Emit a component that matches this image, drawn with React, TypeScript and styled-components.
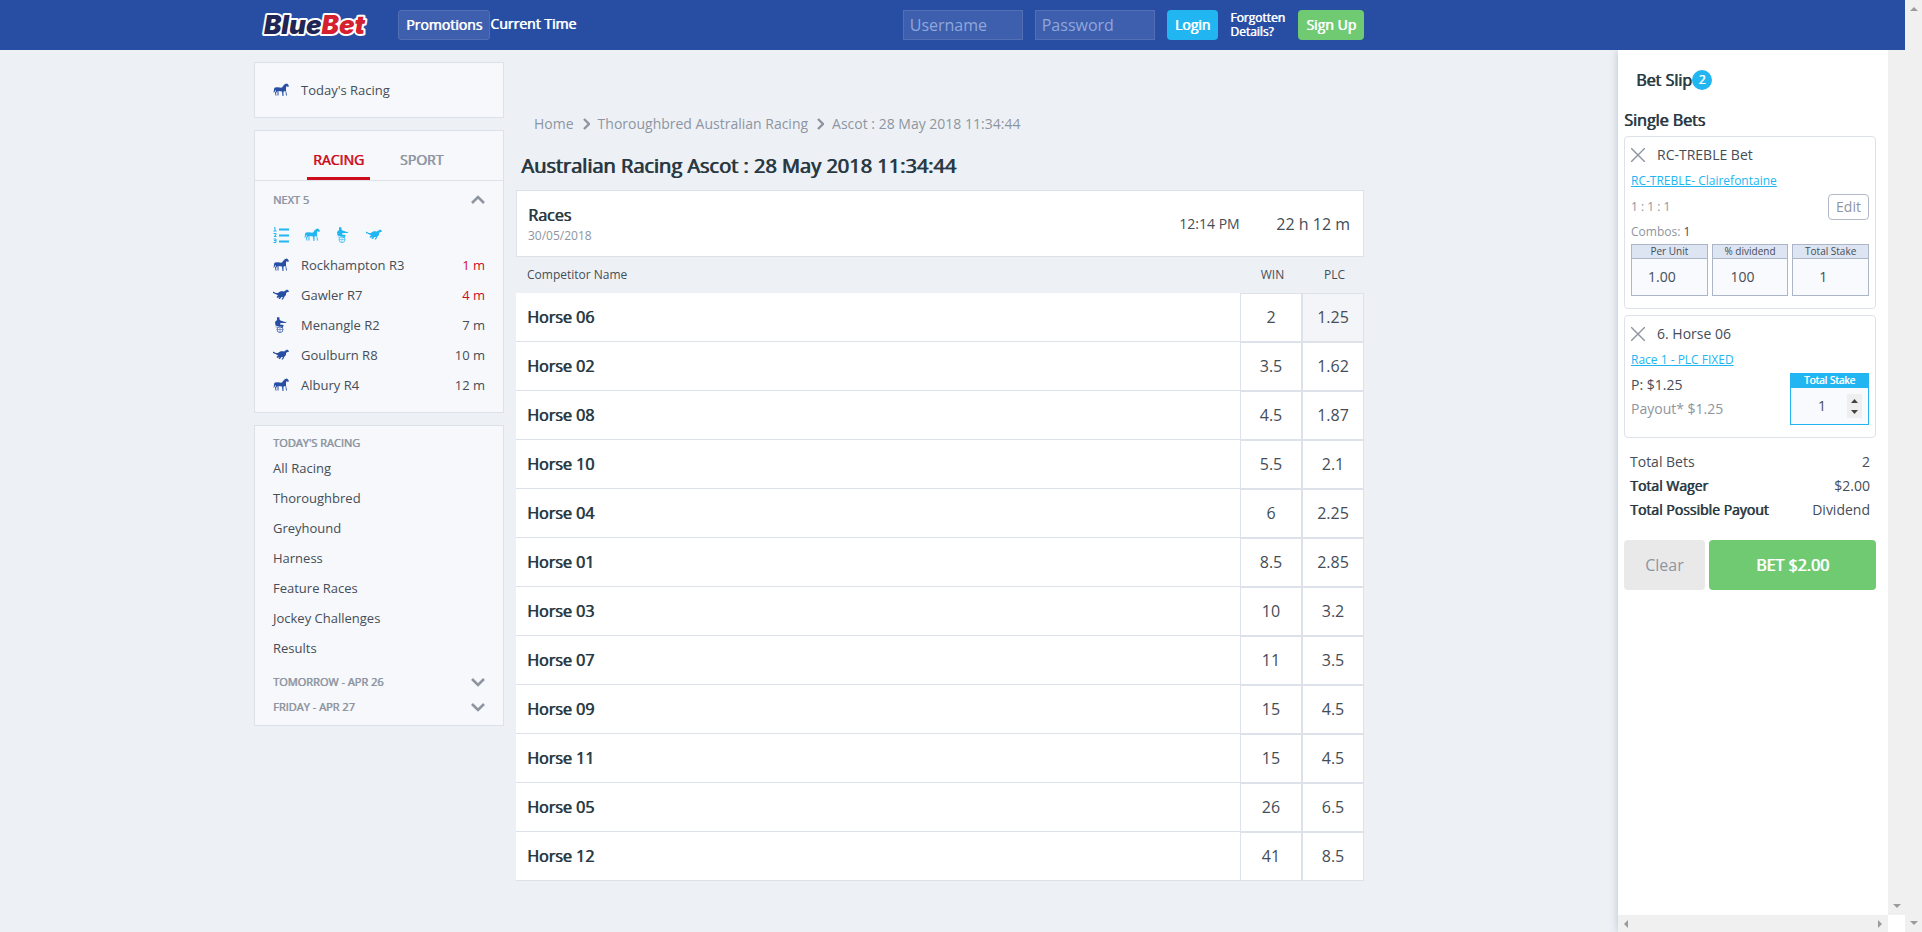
import React from 'react';
import styled, { createGlobalStyle, css } from 'styled-components';

const c = {
  blue: '#284ea3',
  cyan: '#21b6f2',
  green: '#6fca72',
  red: '#cf0c1c',
  ink: '#283842',
  text: '#454d57',
  muted: '#8e95a1',
  line: '#dde2ea',
  page: '#edf1f6',
  panel: '#f6f8fc',
};

const Global = createGlobalStyle`
  *, *::before, *::after { box-sizing: border-box; }
  body { margin: 0; background: ${c.page}; color: ${c.text}; font: 14px/20px "Open Sans", sans-serif; }
  button, input { font: inherit; color: inherit; margin: 0; }
  button { cursor: pointer; border: 0; padding: 0; background: none; }
  a { color: inherit; text-decoration: none; }
  h1, h2, h3, p, ul, ol { margin: 0; padding: 0; list-style: none; font-weight: 400; }
`;

const heavy = css`
  font-weight: 400;
  text-shadow: 0.05em 0 0 currentColor;
`;

const Window = styled.div`
  display: flex;
  min-height: 100vh;
`;
const Page = styled.div`
  flex: 1;
  min-width: 0;
  display: flex;
  flex-direction: column;
`;
const TopBar = styled.header`
  height: 50px;
  padding-right: 287px;
  background: ${c.blue};
  color: #fff;
`;
const TopInner = styled.div`
  max-width: 1110px;
  height: 50px;
  margin: 0 auto;
  padding-left: 6px;
  display: flex;
  align-items: center;
`;
const Logo = styled.a`
  width: 138px;
  display: flex;
`;
const Promotions = styled.button`
  height: 30px;
  padding: 0 7px;
  border: 1px solid #526fb6;
  border-radius: 3px;
  background: #3e5fad;
  line-height: 28px;
  ${heavy}
`;
const CurrentTime = styled.span`
  flex: 1;
  padding-bottom: 2px;
  ${heavy}
`;
const LoginForm = styled.form`
  display: flex;
  align-items: center;
  gap: 12px;
`;
const Credential = styled.input`
  width: 120px;
  height: 30px;
  padding: 0 6px;
  border: 1px solid #526fb6;
  background: #3e5fad;
  font-size: 16px;
  color: #fff;
  &::placeholder { color: #8fa7dc; opacity: 1; }
`;
const TopButton = styled.button<{ $bg: string }>`
  height: 30px;
  padding: 0 8px;
  border-radius: 4px;
  background: ${(p) => p.$bg};
  color: #fff;
  ${heavy}
`;
const Forgotten = styled.a`
  width: 56px;
  font-size: 12px;
  line-height: 14px;
  ${heavy}
`;

const Body = styled.div`
  flex: 1;
  display: flex;
`;
const Content = styled.div`
  flex: 1;
  min-width: 0;
`;
const Columns = styled.div`
  max-width: 1110px;
  margin: 0 auto;
  padding-top: 12px;
  display: flex;
  align-items: flex-start;
  gap: 12px;
`;
const Sidebar = styled.aside`
  width: 250px;
  flex: none;
  display: flex;
  flex-direction: column;
  gap: 12px;
`;
const Panel = styled.section`
  border: 1px solid ${c.line};
  background: ${c.panel};
  color: ${c.text};
  font-size: 13px;
`;
const TodayLink = styled.a`
  display: flex;
  align-items: center;
  gap: 12px;
  height: 54px;
  padding: 0 18px;
`;
const Tabs = styled.div`
  display: flex;
  justify-content: center;
  gap: 20px;
  height: 50px;
  padding-left: 2px;
  border-bottom: 1px solid ${c.line};
`;
const Tab = styled.button<{ $active?: boolean }>`
  padding: 12px 6px 0;
  min-width: 63px;
  border-bottom: 3px solid ${(p) => (p.$active ? c.red : 'transparent')};
  color: ${(p) => (p.$active ? c.red : c.muted)};
  font-size: 14px;
  ${heavy}
`;
const PanelBody = styled.div<{ $top: number; $bottom: number }>`
  padding: ${(p) => p.$top}px 18px ${(p) => p.$bottom}px;
`;
const Fold = styled.button<{ $h: number }>`
  width: 100%;
  height: ${(p) => p.$h}px;
  display: flex;
  align-items: center;
  justify-content: space-between;
  color: ${c.muted};
  font-size: 11px;
  ${heavy}
`;
const Filters = styled.div`
  display: flex;
  align-items: center;
  gap: 15px;
  height: 30px;
  margin-top: 10px;
  color: ${c.cyan};
`;
const FilterButton = styled.button`
  display: flex;
  color: inherit;
`;
const RaceRow = styled.a`
  display: flex;
  align-items: center;
  gap: 12px;
  height: 30px;
`;
const RaceName = styled.span`
  flex: 1;
`;
const Countdown = styled.span<{ $soon?: boolean }>`
  color: ${(p) => (p.$soon ? c.red : c.text)};
`;
const Menu = styled.nav`
  padding-bottom: 6px;
`;
const MenuLink = styled.a`
  display: block;
  height: 30px;
  line-height: 30px;
`;
const IconBox = styled.svg`
  display: block;
  flex: none;
`;

const Main = styled.main`
  flex: 1;
  min-width: 0;
`;
const Crumbs = styled.nav`
  display: flex;
  align-items: center;
  gap: 8px;
  padding: 51px 18px 0;
  height: 72px;
  color: ${c.muted};
`;
const Title = styled.h1`
  padding: 18px 5px 0;
  height: 56px;
  font-size: 20px;
  line-height: 27px;
  color: ${c.ink};
  ${heavy}
`;
const RaceHead = styled.header`
  display: flex;
  align-items: center;
  height: 67px;
  padding: 0 13px 0 11px;
  border: 1px solid ${c.line};
  background: #fff;
`;
const RaceTitle = styled.div`
  flex: 1;
  padding-top: 2px;
`;
const RaceLabel = styled.h2`
  font-size: 16px;
  line-height: 22px;
  color: ${c.ink};
  ${heavy}
`;
const RaceDate = styled.p`
  font-size: 12px;
  color: ${c.muted};
`;
const JumpTime = styled.span`
  width: 97px;
`;
const TimeLeft = styled.span`
  font-size: 16px;
`;
const Runners = styled.table`
  width: 100%;
  border-collapse: separate;
  border-spacing: 0;
`;
const HeadCell = styled.th<{ $price?: boolean }>`
  height: 36px;
  padding: 0 0 0 ${(p) => (p.$price ? 3 : 11)}px;
  width: ${(p) => (p.$price ? '62px' : 'auto')};
  text-align: ${(p) => (p.$price ? 'center' : 'left')};
  font-size: 12px;
  font-weight: 400;
`;
const NameCell = styled.th`
  height: 49px;
  padding: 0 11px;
  border-bottom: 1px solid ${c.line};
  background: #fff;
  text-align: left;
  font-size: 16px;
  color: ${c.ink};
  ${heavy}
`;
const PriceCell = styled.td`
  height: 49px;
  padding: 0;
`;
const Price = styled.button<{ $picked?: boolean }>`
  display: block;
  width: 100%;
  height: 49px;
  padding-bottom: 1px;
  border: 1px solid ${c.line};
  background: ${(p) => (p.$picked ? '#f4f5f8' : '#fff')};
  font-size: 16px;
`;

const Slip = styled.aside`
  width: 270px;
  flex: none;
  display: flex;
  flex-direction: column;
  background: #fff;
  box-shadow: 0 0 8px #b9c1d3;
  clip-path: inset(0 0 0 -8px);
`;
const SlipBody = styled.div`
  flex: 1;
  padding: 17px 12px 0 6px;
`;
const SlipTitle = styled.h2`
  display: flex;
  align-items: center;
  padding-left: 12px;
  height: 26px;
  font-size: 16px;
  color: ${c.ink};
  ${heavy}
`;
const Count = styled.span`
  width: 20px;
  height: 20px;
  border-radius: 50%;
  background: ${c.cyan};
  color: #fff;
  font-size: 12px;
  text-align: center;
`;
const SlipHeading = styled.h3`
  height: 43px;
  padding-top: 17px;
  font-size: 16px;
  color: ${c.ink};
  ${heavy}
`;
const Bet = styled.article<{ $h: number }>`
  min-height: ${(p) => p.$h}px;
  margin-bottom: 6px;
  padding: 8px 6px 12px;
  border: 1px solid ${c.line};
  border-radius: 4px;
`;
const BetName = styled.div`
  display: flex;
  align-items: center;
  gap: 12px;
  height: 20px;
`;
const Remove = styled.button`
  display: flex;
  color: ${c.muted};
`;
const BetLink = styled.a`
  display: block;
  margin-top: 7px;
  font-size: 12px;
  line-height: 18px;
  color: ${c.cyan};
  text-decoration: underline;
`;
const Line = styled.div`
  display: flex;
  align-items: center;
  justify-content: space-between;
  height: 26px;
  margin-top: 4px;
  font-size: 12px;
  color: ${c.muted};
`;
const Edit = styled.button`
  width: 41px;
  height: 26px;
  border: 1px solid #b3b9c9;
  border-radius: 4px;
  font-size: 14px;
  color: ${c.muted};
`;
const Combos = styled.p`
  height: 24px;
  font-size: 12px;
  line-height: 23px;
  color: ${c.muted};
  b { color: ${c.text}; font-weight: 400; }
`;
const Stakes = styled.div`
  display: flex;
  gap: 4px;
`;
const StakeBox = styled.label<{ $active?: boolean }>`
  flex: 1;
  min-width: 0;
  display: flex;
  flex-direction: column;
  height: 52px;
  border: 1px solid ${(p) => (p.$active ? c.cyan : '#adb5c9')};
  background: #f8fafd;
  text-align: center;
`;
const StakeLabel = styled.span<{ $active?: boolean }>`
  height: 14px;
  border-bottom: ${(p) => (p.$active ? '0' : '1px solid #adb5c9')};
  background: ${(p) => (p.$active ? c.cyan : '#dde4f2')};
  color: ${(p) => (p.$active ? '#fff' : c.text)};
  font-size: 10px;
  line-height: 13px;
  ${(p) => p.$active && heavy}
`;
const StakeRow = styled.span`
  flex: 1;
  display: flex;
  align-items: center;
  padding: 0 6px 1px;
`;
const StakeInput = styled.input`
  flex: 1;
  width: 0;
  min-width: 0;
  height: 24px;
  border: 0;
  padding: 0 15px 0 0;
  background: transparent;
  text-align: center;
  font-size: 14px;
`;
const StepInput = styled(StakeInput)`
  padding: 0;
`;
const Spinner = styled.span`
  display: flex;
  width: 15px;
  height: 24px;
  background: #efefef;
  color: #444;
`;
const SingleBottom = styled.div`
  display: flex;
  justify-content: space-between;
`;
const Payouts = styled.div`
  padding-top: 4px;
  line-height: 24px;
`;
const Payout = styled.p<{ $muted?: boolean }>`
  color: ${(p) => (p.$muted ? c.muted : c.text)};
`;
const SingleStake = styled.div`
  width: 79px;
  padding-top: 4px;
  display: flex;
`;
const Totals = styled.dl`
  margin: 0;
  padding: 6px 6px 0;
`;
const TotalRow = styled.div`
  display: flex;
  justify-content: space-between;
  line-height: 24px;
  dd { margin: 0; }
`;
const TotalLabel = styled.dt<{ $heavy?: boolean }>`
  color: ${(p) => (p.$heavy ? c.ink : c.text)};
  ${(p) => p.$heavy && heavy}
`;
const Actions = styled.div`
  display: flex;
  gap: 4px;
  margin-top: 18px;
`;
const Clear = styled.button`
  width: 81px;
  height: 50px;
  border-radius: 4px;
  background: #e9e9ea;
  color: ${c.muted};
  font-size: 16px;
`;
const Place = styled.button`
  flex: 1;
  height: 50px;
  border-radius: 4px;
  background: ${c.green};
  color: #fff;
  font-size: 16px;
  ${heavy}
`;

const ScrollV = styled.div<{ $gap: number }>`
  width: 17px;
  flex: none;
  display: flex;
  flex-direction: column;
  align-items: center;
  justify-content: space-between;
  margin-bottom: ${(p) => p.$gap}px;
  padding: 5px 0;
  background: #f0f0f0;
`;
const ScrollH = styled.div`
  height: 17px;
  display: flex;
  align-items: center;
  justify-content: space-between;
  padding: 0 4px;
  background: #f0f0f0;
`;
const SlipFrame = styled.div`
  display: flex;
  flex: none;
  background: #fff;
`;

const Arrow = ({ dir }: { dir: 'up' | 'down' | 'left' | 'right' }) => {
  const d = {
    up: 'M0 6L4 2L8 6Z',
    down: 'M0 2L4 6L8 2Z',
    left: 'M6 0L2 4L6 8Z',
    right: 'M2 0L6 4L2 8Z',
  }[dir];
  return (
    <svg width="8" height="8" viewBox="0 0 8 8" fill="#9b9b9b" aria-hidden="true">
      <path d={d} />
    </svg>
  );
};

const Chevron = ({ dir }: { dir: 'up' | 'down' | 'right' }) => {
  const d = {
    up: 'M1 8L7 2L13 8',
    down: 'M1 2L7 8L13 2',
    right: 'M2 1L7 6L2 11',
  }[dir];
  const [w, h] = dir === 'right' ? [8, 12] : [14, 10];
  return (
    <svg
      width={w}
      height={h}
      viewBox={`0 0 ${w} ${h}`}
      fill="none"
      stroke="currentColor"
      strokeWidth={dir === 'right' ? 2.4 : 2.6}
      aria-hidden="true"
    >
      <path d={d} />
    </svg>
  );
};

type Kind = 'horse' | 'dog' | 'harness' | 'list';

const RaceIcon = ({ kind, color = c.blue }: { kind: Kind; color?: string }) => (
  <IconBox width="16" height="16" viewBox="0 0 32 32" fill={color} stroke={color} aria-hidden="true">
    {kind === 'horse' && (
      <path
        stroke="none"
        d="M32 8L30 5L28 3L24 4L21 7L18 11C15 12 12 10 8 11C5 10 2 12 2 15L1 22L3 20L5 16L6 18L4 21L5 27H7L6 22L9 18L9 27H11L11 18L18 19L19 28H21L21 19L25 18L26 27H28L26 17L26 12L27 8L30 10Z"
      />
    )}
    {kind === 'dog' && (
      <path
        stroke="none"
        d="M32 8L28 5L25 7L22 9C18 8 13 8 10 12L6 12L0 9L0 12L7 15L10 17L7 20L9 22L13 20L11 24L14 24L17 20L20 20L17 25L20 25L23 19L26 16L26 12L29 10L31 10Z"
      />
    )}
    {kind === 'harness' && (
      <>
        <path
          stroke="none"
          d="M9 0L13 1L13 5L15 7L24 10L24 11L27 9L26 12L15 12L14 15L21 16L21 18L18 22L16 22L17 18L8 18L5 17L4 10L8 6L8 2Z"
        />
        <circle cx="14" cy="25" r="6" fill="none" strokeWidth="1.5" />
        <path d="M14 19V31M8 25H20M5 20H20" fill="none" strokeWidth="1" />
      </>
    )}
    {kind === 'list' && (
      <>
        <path d="M12 5H32M12 17H32M12 29H32" fill="none" strokeWidth="4" />
        <path
          d="M2 2L4 1V8M1 8H7M1 13H6V16L2 19H7M1 24H6V31H1M2 27H6"
          fill="none"
          strokeWidth="2"
        />
      </>
    )}
  </IconBox>
);

const BlueBetLogo = () => (
  <svg width="116" height="36" viewBox="0 0 116 36" role="img" aria-label="BlueBet">
    <text
      x="4"
      y="27"
      fontFamily="Inter, sans-serif"
      fontWeight="900"
      fontStyle="italic"
      fontSize="26"
      stroke="#fff"
      strokeWidth="4"
      strokeLinejoin="round"
      paintOrder="stroke"
    >
      <tspan fill="#1f2555">Blue</tspan>
      <tspan fill="#d4202f">Bet</tspan>
    </text>
  </svg>
);

const next5: { kind: Kind; name: string; left: string; soon?: boolean }[] = [
  { kind: 'horse', name: 'Rockhampton R3', left: '1 m', soon: true },
  { kind: 'dog', name: 'Gawler R7', left: '4 m', soon: true },
  { kind: 'harness', name: 'Menangle R2', left: '7 m' },
  { kind: 'dog', name: 'Goulburn R8', left: '10 m' },
  { kind: 'horse', name: 'Albury R4', left: '12 m' },
];

const menu = ['All Racing', 'Thoroughbred', 'Greyhound', 'Harness', 'Feature Races', 'Jockey Challenges', 'Results'];

const filters: { kind: Kind; label: string }[] = [
  { kind: 'list', label: 'All codes' },
  { kind: 'horse', label: 'Thoroughbred' },
  { kind: 'harness', label: 'Harness' },
  { kind: 'dog', label: 'Greyhound' },
];

const runners: [string, string, string][] = [
  ['Horse 06', '2', '1.25'],
  ['Horse 02', '3.5', '1.62'],
  ['Horse 08', '4.5', '1.87'],
  ['Horse 10', '5.5', '2.1'],
  ['Horse 04', '6', '2.25'],
  ['Horse 01', '8.5', '2.85'],
  ['Horse 03', '10', '3.2'],
  ['Horse 07', '11', '3.5'],
  ['Horse 09', '15', '4.5'],
  ['Horse 11', '15', '4.5'],
  ['Horse 05', '26', '6.5'],
  ['Horse 12', '41', '8.5'],
];

const stakes = [
  ['Per Unit', '1.00'],
  ['% dividend', '100'],
  ['Total Stake', '1'],
];

const totals: { label: string; value: string; heavy?: boolean }[] = [
  { label: 'Total Bets', value: '2' },
  { label: 'Total Wager', value: '$2.00', heavy: true },
  { label: 'Total Possible Payout', value: 'Dividend', heavy: true },
];

const Cross = () => (
  <svg width="14" height="14" viewBox="0 0 14 14" stroke="currentColor" strokeWidth="1.4" aria-hidden="true">
    <path d="M0 0L14 14M14 0L0 14" />
  </svg>
);

export default function App() {
  return (
    <>
      <Global />
      <Window>
        <Page>
          <TopBar>
            <TopInner>
              <Logo href="#">
                <BlueBetLogo />
              </Logo>
              <Promotions type="button">Promotions</Promotions>
              <CurrentTime>Current Time</CurrentTime>
              <LoginForm onSubmit={(e) => e.preventDefault()}>
                <Credential placeholder="Username" aria-label="Username" />
                <Credential type="password" placeholder="Password" aria-label="Password" />
                <TopButton $bg={c.cyan}>Login</TopButton>
                <Forgotten href="#">Forgotten Details?</Forgotten>
                <TopButton type="button" $bg={c.green}>
                  Sign Up
                </TopButton>
              </LoginForm>
            </TopInner>
          </TopBar>
          <Body>
            <Content>
              <Columns>
                <Sidebar>
                  <Panel>
                    <TodayLink href="#">
                      <RaceIcon kind="horse" />
                      Today's Racing
                    </TodayLink>
                  </Panel>
                  <Panel>
                    <Tabs>
                      <Tab type="button" $active>
                        RACING
                      </Tab>
                      <Tab type="button">SPORT</Tab>
                    </Tabs>
                    <PanelBody $top={9} $bottom={12}>
                      <Fold type="button" $h={20}>
                        NEXT 5
                        <Chevron dir="up" />
                      </Fold>
                      <Filters>
                        {filters.map((f) => (
                          <FilterButton type="button" key={f.kind} aria-label={f.label}>
                            <RaceIcon kind={f.kind} color={c.cyan} />
                          </FilterButton>
                        ))}
                      </Filters>
                      {next5.map((r) => (
                        <RaceRow href="#" key={r.name}>
                          <RaceIcon kind={r.kind} />
                          <RaceName>{r.name}</RaceName>
                          <Countdown $soon={r.soon}>{r.left}</Countdown>
                        </RaceRow>
                      ))}
                    </PanelBody>
                  </Panel>
                  <Panel>
                    <PanelBody $top={6} $bottom={6}>
                      <Fold type="button" $h={21}>
                        TODAY'S RACING
                      </Fold>
                      <Menu aria-label="Today's racing">
                        {menu.map((m) => (
                          <MenuLink href="#" key={m}>
                            {m}
                          </MenuLink>
                        ))}
                      </Menu>
                      <Fold type="button" $h={25}>
                        TOMORROW - APR 26
                        <Chevron dir="down" />
                      </Fold>
                      <Fold type="button" $h={25}>
                        FRIDAY - APR 27
                        <Chevron dir="down" />
                      </Fold>
                    </PanelBody>
                  </Panel>
                </Sidebar>
                <Main>
                  <Crumbs aria-label="Breadcrumb">
                    <a href="#">Home</a>
                    <Chevron dir="right" />
                    <a href="#">Thoroughbred Australian Racing</a>
                    <Chevron dir="right" />
                    <span>Ascot : 28 May 2018 11:34:44</span>
                  </Crumbs>
                  <Title>Australian Racing Ascot : 28 May 2018 11:34:44</Title>
                  <RaceHead>
                    <RaceTitle>
                      <RaceLabel>Races</RaceLabel>
                      <RaceDate>30/05/2018</RaceDate>
                    </RaceTitle>
                    <JumpTime>12:14 PM</JumpTime>
                    <TimeLeft>22 h 12 m</TimeLeft>
                  </RaceHead>
                  <Runners>
                    <thead>
                      <tr>
                        <HeadCell scope="col">Competitor Name</HeadCell>
                        <HeadCell scope="col" $price>
                          WIN
                        </HeadCell>
                        <HeadCell scope="col" $price>
                          PLC
                        </HeadCell>
                      </tr>
                    </thead>
                    <tbody>
                      {runners.map(([name, win, plc], i) => (
                        <tr key={name}>
                          <NameCell scope="row">{name}</NameCell>
                          <PriceCell>
                            <Price type="button">{win}</Price>
                          </PriceCell>
                          <PriceCell>
                            <Price type="button" $picked={i === 0}>
                              {plc}
                            </Price>
                          </PriceCell>
                        </tr>
                      ))}
                    </tbody>
                  </Runners>
                </Main>
              </Columns>
            </Content>
            <SlipFrame>
              <Slip>
                <SlipBody>
                  <SlipTitle>
                    Bet Slip<Count>2</Count>
                  </SlipTitle>
                  <SlipHeading>Single Bets</SlipHeading>
                  <Bet $h={173}>
                    <BetName>
                      <Remove type="button" aria-label="Remove RC-TREBLE Bet">
                        <Cross />
                      </Remove>
                      RC-TREBLE Bet
                    </BetName>
                    <BetLink href="#">RC-TREBLE- Clairefontaine</BetLink>
                    <Line>
                      1 : 1 : 1<Edit type="button">Edit</Edit>
                    </Line>
                    <Combos>
                      Combos: <b>1</b>
                    </Combos>
                    <Stakes>
                      {stakes.map(([label, value]) => (
                        <StakeBox key={label}>
                          <StakeLabel>{label}</StakeLabel>
                          <StakeRow>
                            <StakeInput defaultValue={value} />
                          </StakeRow>
                        </StakeBox>
                      ))}
                    </Stakes>
                  </Bet>
                  <Bet $h={123}>
                    <BetName>
                      <Remove type="button" aria-label="Remove Horse 06">
                        <Cross />
                      </Remove>
                      6. Horse 06
                    </BetName>
                    <BetLink href="#">Race 1 - PLC FIXED</BetLink>
                    <SingleBottom>
                      <Payouts>
                        <Payout>P: $1.25</Payout>
                        <Payout $muted>Payout* $1.25</Payout>
                      </Payouts>
                      <SingleStake>
                        <StakeBox $active>
                          <StakeLabel $active>Total Stake</StakeLabel>
                          <StakeRow>
                            <StepInput defaultValue="1" inputMode="numeric" />
                            <Spinner>
                              <svg width="15" height="24" viewBox="0 0 15 24" fill="currentColor" aria-hidden="true">
                                <path d="M4 9L7.5 5L11 9ZM4 16L7.5 20L11 16Z" />
                              </svg>
                            </Spinner>
                          </StakeRow>
                        </StakeBox>
                      </SingleStake>
                    </SingleBottom>
                  </Bet>
                  <Totals>
                    {totals.map((t) => (
                      <TotalRow key={t.label}>
                        <TotalLabel $heavy={t.heavy}>{t.label}</TotalLabel>
                        <dd>{t.value}</dd>
                      </TotalRow>
                    ))}
                  </Totals>
                  <Actions>
                    <Clear type="button">Clear</Clear>
                    <Place type="button">BET $2.00</Place>
                  </Actions>
                </SlipBody>
                <ScrollH>
                  <Arrow dir="left" />
                  <Arrow dir="right" />
                </ScrollH>
              </Slip>
              <ScrollV $gap={17}>
                <span />
                <Arrow dir="down" />
              </ScrollV>
            </SlipFrame>
          </Body>
        </Page>
        <ScrollV $gap={0}>
          <Arrow dir="up" />
          <Arrow dir="down" />
        </ScrollV>
      </Window>
    </>
  );
}
